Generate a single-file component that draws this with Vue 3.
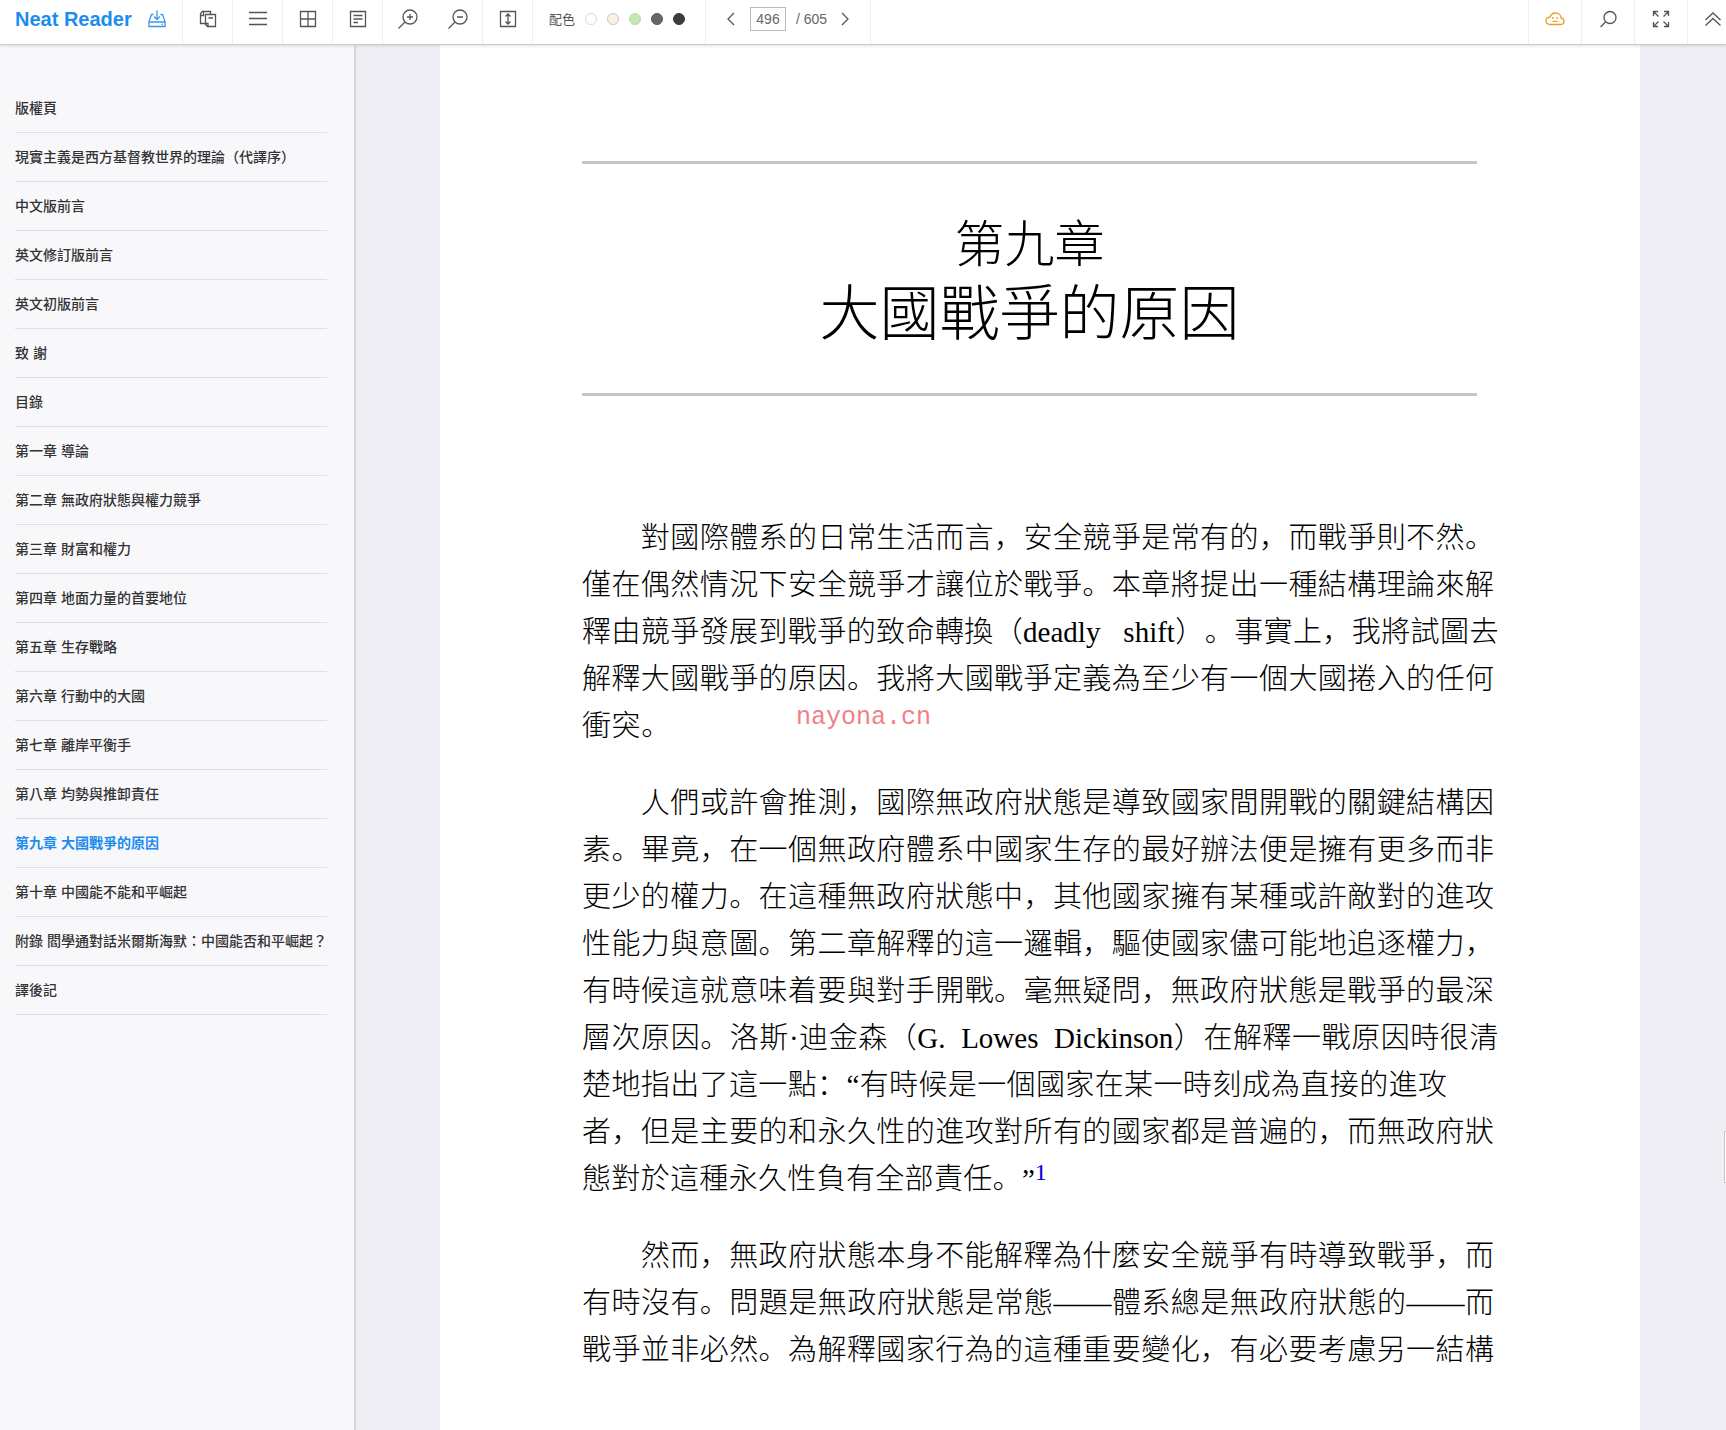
<script setup>
import { ref } from 'vue'

const chapters = [
  '版權頁',
  '現實主義是西方基督教世界的理論（代譯序）',
  '中文版前言',
  '英文修訂版前言',
  '英文初版前言',
  '致 謝',
  '目錄',
  '第一章 導論',
  '第二章 無政府狀態與權力競爭',
  '第三章 財富和權力',
  '第四章 地面力量的首要地位',
  '第五章 生存戰略',
  '第六章 行動中的大國',
  '第七章 離岸平衡手',
  '第八章 均勢與推卸責任',
  '第九章 大國戰爭的原因',
  '第十章 中國能不能和平崛起',
  '附錄 閻學通對話米爾斯海默：中國能否和平崛起？',
  '譯後記',
]
const current = ref(15)
const page = ref('496')

const themes = [
  { name: '白色', fill: '#ffffff', edge: '#d8d8d8' },
  { name: '米色', fill: '#f7f1e3', edge: '#cfc8b8' },
  { name: '綠色', fill: '#c3e8b4', edge: '#b5dba6' },
  { name: '灰色', fill: '#66666a', edge: '#5a5a5e' },
  { name: '黑色', fill: '#3c3c3e', edge: '#3c3c3e' },
]

// A full line holds 31 character cells; other lines state how many they use.
const CELLS = 31
const paragraphs = [
  [
    { text: '對國際體系的日常生活而言，安全競爭是常有的，而戰爭則不然。', cells: 29 },
    { text: '僅在偶然情況下安全競爭才讓位於戰爭。本章將提出一種結構理論來解' },
    { text: '釋由競爭發展到戰爭的致命轉換（deadly\u00a0\u00a0 shift）。事實上，我將試圖去', cells: 31.15 },
    { text: '解釋大國戰爭的原因。我將大國戰爭定義為至少有一個大國捲入的任何' },
    { text: '衝突。', cells: 3 },
  ],
  [
    { text: '人們或許會推測，國際無政府狀態是導致國家間開戰的關鍵結構因', cells: 29 },
    { text: '素。畢竟，在一個無政府體系中國家生存的最好辦法便是擁有更多而非' },
    { text: '更少的權力。在這種無政府狀態中，其他國家擁有某種或許敵對的進攻' },
    { text: '性能力與意圖。第二章解釋的這一邏輯，驅使國家儘可能地追逐權力，' },
    { text: '有時候這就意味着要與對手開戰。毫無疑問，無政府狀態是戰爭的最深' },
    { text: '層次原因。洛斯·迪金森（G.\u00a0 Lowes\u00a0 Dickinson）在解釋一戰原因時很清', cells: 31.15 },
    { text: '楚地指出了這一點：“有時候是一個國家在某一時刻成為直接的進攻', cells: 29.4 },
    { text: '者，但是主要的和永久性的進攻對所有的國家都是普遍的，而無政府狀' },
    { text: '態對於這種永久性負有全部責任。”', cells: 15.8, note: '1' },
  ],
  [
    { text: '然而，無政府狀態本身不能解釋為什麼安全競爭有時導致戰爭，而', cells: 29 },
    { text: '有時沒有。問題是無政府狀態是常態——體系總是無政府狀態的——而' },
    { text: '戰爭並非必然。為解釋國家行為的這種重要變化，有必要考慮另一結構' },
  ],
]
const lineWidth = (line) => ({ width: `${((line.cells ?? CELLS) / CELLS) * 100}%` })
</script>

<template>
  <div class="reader">
    <header class="toolbar">
      <div class="brand">
        <span class="name">Neat Reader</span>
        <button class="save" aria-label="儲存">
          <svg width="18" height="18" viewBox="0 0 18 18"><path d="M5.500 4.500H3.500L1 11.500V16.500H17V11.500L14.500 4.500H12.500M1 12H17M9 0.500V9M6 6.500L9 9.500L12 6.500M13.500 14.300H14.800" /></svg>
        </button>
      </div>
      <button class="tool" aria-label="複製">
        <svg width="18" height="18" viewBox="0 0 18 18"><path d="M6 13.500H1.500V3.500L3.500 1.500H11.500V4M1.500 5.500H4.500V1.500M6.500 4.500H16.500V16.500H8.500L6.500 14.500ZM6.500 13.500H9V16.500M9.500 8H14" /></svg>
      </button>
      <button class="tool" aria-label="目錄">
        <svg width="18" height="18" viewBox="0 0 18 18"><path d="M0 2.500H18M0 8.500H18M0 14.500H18" /></svg>
      </button>
      <button class="tool" aria-label="縮圖">
        <svg width="18" height="18" viewBox="0 0 18 18"><path d="M1.500 1.500H16.500V16.500H1.500ZM9 1.500V16.500M1.500 9H16.500" /></svg>
      </button>
      <button class="tool" aria-label="筆記">
        <svg width="18" height="18" viewBox="0 0 18 18"><path d="M1.500 1.500H16.500V16.500H1.500ZM4.500 5.500H13.500M4.500 9H13.500M4.500 12.500H9" /></svg>
      </button>
      <button class="tool joined" aria-label="放大">
        <svg width="20" height="20" viewBox="0 0 20 20"><circle cx="12" cy="8" r="7" /><path d="M7 13L0.500 19.500M9 8H15M12 5V11" /></svg>
      </button>
      <button class="tool" aria-label="縮小">
        <svg width="20" height="20" viewBox="0 0 20 20"><circle cx="12" cy="8" r="7" /><path d="M7 13L0.500 19.500M9 8H15" /></svg>
      </button>
      <button class="tool" aria-label="適合高度">
        <svg width="18" height="18" viewBox="0 0 18 18"><path d="M1.500 1.500H16.500V16.500H1.500ZM9 4.500V13.500M6.500 6.500L9 4L11.500 6.500M6.500 11.500L9 14L11.500 11.500" /></svg>
      </button>
      <div class="themes">
        <span class="label">配色</span>
        <button
          v-for="theme in themes"
          :key="theme.name"
          class="swatch"
          :aria-label="theme.name"
          :style="{ background: theme.fill, borderColor: theme.edge }"
        ></button>
      </div>
      <div class="pager">
        <button class="arrow" aria-label="上一頁">
          <svg width="8" height="14" viewBox="0 0 8 14"><path d="M7 1L1 7L7 13" /></svg>
        </button>
        <input v-model="page" class="number" aria-label="頁碼" />
        <span class="total">/ 605</span>
        <button class="arrow" aria-label="下一頁">
          <svg width="8" height="14" viewBox="0 0 8 14"><path d="M1 1L7 7L1 13" /></svg>
        </button>
      </div>
      <div class="right">
        <button class="tool cloud" aria-label="雲端">
          <svg width="20" height="14" viewBox="0 0 20 14"><path d="M5 12.500H15.500C17.500 12.500 19 11 19 9.300C19 7.500 17.800 6.300 16 6C16 3 13.500 1 10.500 1C7.800 1 5.800 2.500 5.200 5C2.800 5.200 1 6.700 1 8.800C1 11 2.700 12.500 5 12.500ZM7 6H8.800M11.200 6H13M7.500 9.300H12.500" /></svg>
        </button>
        <button class="tool" aria-label="搜尋">
          <svg width="18" height="18" viewBox="0 0 18 18"><circle cx="11" cy="7.500" r="6" /><path d="M6.500 12L1.500 17" /></svg>
        </button>
        <button class="tool" aria-label="全螢幕">
          <svg width="18" height="18" viewBox="0 0 18 18"><path d="M1.500 6V1.500H6M1.500 1.500L6.500 6.500M12 1.500H16.500V6M16.500 1.500L11.500 6.500M1.500 12V16.500H6M1.500 16.500L6.500 11.500M12 16.500H16.500V12M16.500 16.500L11.500 11.500" /></svg>
        </button>
        <button class="tool" aria-label="收起">
          <svg width="18" height="16" viewBox="0 0 18 16"><path d="M1.500 9L9 2L16.500 9M1.500 14.500L9 7.500L16.500 14.500" /></svg>
        </button>
      </div>
    </header>

    <div class="body">
      <nav class="sidebar">
        <a
          v-for="(title, i) in chapters"
          :key="title"
          href="#"
          class="chapter"
          :class="{ active: i === current }"
          @click.prevent="current = i"
        >{{ title }}</a>
      </nav>
      <main class="stage">
        <article class="sheet">
          <header class="heading">
            <h2>第九章</h2>
            <h1>大國戰爭的原因</h1>
          </header>
          <p v-for="(lines, p) in paragraphs" :key="p" class="paragraph">
            <span
              v-for="(line, l) in lines"
              :key="l"
              class="line"
              :class="{ first: l === 0 }"
              :style="lineWidth(line)"
            >{{ line.text }}<a v-if="line.note" href="#" class="note">{{ line.note }}</a></span>
          </p>
          <span class="watermark">nayona.cn</span>
        </article>
        <button class="handle" aria-label="側欄"></button>
      </main>
    </div>
  </div>
</template>

<style>
body {
  margin: 0;
}
</style>

<style scoped>
.reader {
  min-height: 100vh;
  display: flex;
  flex-direction: column;
  background: #eeeef4;
  font-family: "Liberation Sans", "Noto Sans CJK TC", sans-serif;
  color: #333;
}
button {
  padding: 0;
  border: 0;
  background: none;
}
svg {
  display: block;
  fill: none;
  stroke: #555;
  stroke-width: 1.3;
}
.toolbar {
  position: relative;
  z-index: 2;
  display: flex;
  height: 44px;
  background: #fff;
  border-bottom: 1px solid #c9c9ce;
  box-shadow: 0 1px 3px rgba(0, 0, 0, 0.12);
}
.brand {
  box-sizing: border-box;
  width: 183px;
  display: flex;
  align-items: center;
  gap: 16px;
  padding: 0 0 6px 15px;
  border-right: 1px solid #eee;
}
.name {
  font-size: 20px;
  font-weight: 700;
  color: #1c8df0;
}
.save svg {
  stroke: #3a97ee;
}
.tool {
  box-sizing: border-box;
  width: 50px;
  display: flex;
  align-items: center;
  justify-content: center;
  padding-bottom: 6px;
  border-right: 1px solid #eee;
}
.tool.joined {
  border-right-color: transparent;
}
.themes {
  box-sizing: border-box;
  width: 173px;
  display: flex;
  align-items: center;
  gap: 10px;
  padding: 0 0 6px 16px;
  border-right: 1px solid #eee;
}
.label {
  font-family: "Noto Sans CJK TC", sans-serif;
  font-size: 13px;
  line-height: 20px;
  color: #555;
}
.swatch {
  box-sizing: border-box;
  width: 12px;
  height: 12px;
  border: 1px solid;
  border-radius: 50%;
}
.pager {
  box-sizing: border-box;
  width: 165px;
  display: flex;
  align-items: center;
  padding: 0 21px 6px 21px;
  border-right: 1px solid #eee;
  font-size: 14px;
  color: #666;
}
.number {
  box-sizing: border-box;
  width: 36px;
  height: 24px;
  margin: 0 10px 0 15px;
  padding: 0;
  border: 1px solid #bbb;
  text-align: center;
  font: inherit;
  color: inherit;
}
.total {
  flex: 1;
}
.right {
  display: flex;
  margin-left: auto;
  border-left: 1px solid #eee;
}
.right .tool {
  width: 53px;
}
.right .tool:last-child {
  width: 50px;
  margin-right: -12px;
  border-right: 0;
}
.right {
  overflow: hidden;
}
.cloud svg {
  stroke: #f39a2d;
}
.body {
  flex: 1;
  display: flex;
}
.sidebar {
  position: relative;
  z-index: 1;
  box-sizing: border-box;
  flex: 0 0 354px;
  padding: 39px 27px 39px 15px;
  background: #f8f8fb;
  box-shadow: 1px 0 3px rgba(0, 0, 0, 0.2);
}
.chapter {
  display: block;
  font-size: 14px;
  line-height: 48px;
  font-weight: 500;
  color: #333;
  text-decoration: none;
  white-space: nowrap;
  text-spacing-trim: space-all;
  border-bottom: 1px solid #e0e0e4;
}
.chapter.active {
  font-weight: 700;
  color: #1c8df0;
}
.stage {
  position: relative;
  flex: 1;
  display: flex;
  justify-content: center;
  overflow: hidden;
}
.sheet {
  position: relative;
  box-sizing: border-box;
  width: 1200px;
  padding: 116px 146px 40px 142px;
  background: #fff;
  color: #000;
  font-family: "Liberation Serif", "Noto Sans CJK SC", serif;
  font-size: 29px;
  line-height: 47px;
  font-weight: 300;
}
.heading {
  margin: 0 17px 119px 0;
  padding: 46px 0 43px;
  border: solid #c6c6c6;
  border-width: 3px 0;
  text-align: center;
}
h1,
h2 {
  margin: 0;
  line-height: 70px;
  font-weight: 300;
}
h2 {
  font-size: 50px;
}
h1 {
  font-size: 60px;
}
.paragraph {
  margin: 0 0 30px;
}
.line {
  display: block;
  text-align: justify;
  text-align-last: justify;
  white-space: nowrap;
  text-spacing-trim: space-all;
}
.line.first {
  margin-left: auto;
}
.note {
  color: #00d;
  font-size: 24px;
  line-height: 1px;
  vertical-align: 9px;
  text-decoration: none;
}
.watermark {
  position: absolute;
  top: 649px;
  left: 356px;
  font-family: "Liberation Mono", monospace;
  font-size: 25px;
  color: #f08088;
}
.handle {
  position: absolute;
  top: 1086px;
  right: 0;
  width: 2px;
  height: 52px;
  background: #fff;
  border: 1px solid #c4c4ca;
  border-right: 0;
}
</style>
